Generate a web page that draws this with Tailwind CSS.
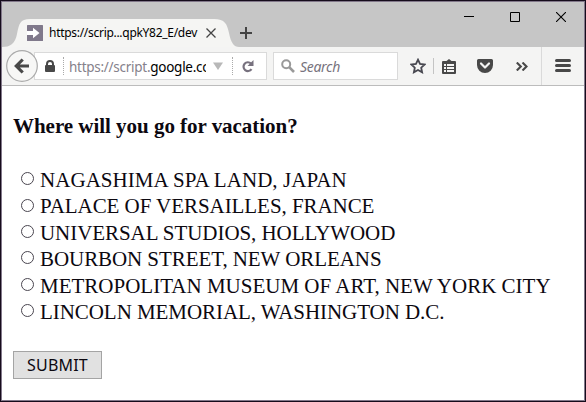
<!DOCTYPE html>
<html lang="en">
<head>
<meta charset="utf-8">
<title>Vacation poll</title>
<script src="https://cdn.jsdelivr.net/npm/@tailwindcss/browser@4"></script>
</head>
<body class="bg-white">
<div class="w-[586px] h-[402px] border border-[#160c1c] overflow-hidden">
<div class="w-[584px] h-[400px] border border-[#82788a] flex flex-col bg-white overflow-hidden">

  <!-- Title bar with the tab strip -->
  <header class="h-[45px] shrink-0 bg-[#c6c6c6] flex items-start">
    <div class="relative w-[237px] h-[28px] mt-[17px]">
      <svg class="absolute inset-0" width="237" height="28" viewBox="0 0 237 28"><path d="M0 28C8 28 13 25 15 15C17 5 18 0 28 0H212C223 0 225 5 227 14C229 24 232 28 237 28Z" fill="#f5f5f3"/></svg>
      <div class="relative flex items-center h-[28px] pl-[25px] font-['Noto_Sans','Open_Sans',sans-serif]">
        <svg class="shrink-0" width="16" height="16" viewBox="0 0 16 16"><rect width="16" height="16" rx="0.5" fill="#80798b"/><path d="M0 6h6V2.8L12.5 8 6 13.2V10H0z" fill="#fff"/></svg>
        <span class="ml-[6px] w-[149px] text-[12px] tracking-[-0.29px] leading-[16px] text-black whitespace-nowrap">https://scrip...qpkY82_E/dev</span>
        <svg class="ml-[8px] shrink-0" width="10" height="10" viewBox="0 0 10 10"><path d="M.5.5l9 9M9.5.5l-9 9" stroke="#444" stroke-width="1.3"/></svg>
      </div>
    </div>
    <svg class="mt-[25px] ml-[1px]" width="12" height="12" viewBox="0 0 12 12"><path d="M6 0v12M0 6h12" stroke="#444" stroke-width="2"/></svg>
    <div class="ml-auto mr-[18px] mt-[10px] flex gap-[36px]">
      <svg width="10" height="10" viewBox="0 0 10 10"><path d="M0 4.500h10" stroke="#000"/></svg>
      <svg width="10" height="10" viewBox="0 0 10 10"><path d="M.5.5h9v9h-9z" fill="none" stroke="#000"/></svg>
      <svg width="10" height="10" viewBox="0 0 10 10"><path d="M0 0l10 10M10 0L0 10" stroke="#000" stroke-width="1.1"/></svg>
    </div>
  </header>

  <!-- Navigation toolbar -->
  <nav class="h-[39px] shrink-0 bg-[#f4f4f3] border-b border-[#bcbcbc] flex items-center font-['Noto_Sans','Open_Sans',sans-serif]">
    <svg class="relative z-10 ml-[4px] shrink-0" width="32" height="32" viewBox="0 0 32 32"><circle cx="16" cy="16" r="15.3" fill="#f7f7f6" stroke="#aaa" stroke-width="1.2"/><path d="M23 16H11M16.7 9.5L10.3 16l6.4 6.5" fill="none" stroke="#484848" stroke-width="3.2"/></svg>
    <div class="-ml-[4px] w-[233px] h-[28px] bg-white border border-[#dadada] flex items-center shrink-0">
      <svg class="ml-[10px] mr-[8px] shrink-0" width="10" height="12" viewBox="0 0 10 12"><path d="M2 6V4a3 3 0 016 0v2" fill="none" stroke="#484848" stroke-width="2"/><rect y="5" width="10" height="7" rx="1" fill="#484848"/></svg>
      <span class="h-[18px] border-l border-dotted border-[#aaa]"></span>
      <span class="ml-[5px] mt-[2px] w-[137px] overflow-hidden whitespace-nowrap text-[13.500px] tracking-[-0.27px] leading-[20px] text-[#85818b]">https://script.<span class="text-black">google.cc</span></span>
      <svg class="ml-[7px] shrink-0" width="10" height="8" viewBox="0 0 10 8"><path d="M0 .5h10L5 8z" fill="#b8b8b8"/></svg>
      <span class="ml-[9px] h-[18px] border-l border-dotted border-[#aaa]"></span>
      <svg class="ml-[9px] shrink-0" width="12" height="13" viewBox="0 0 12 13"><path d="M9.500 9.200A4.400 4.400 0 119 3.500" fill="none" stroke="#77717e" stroke-width="2.2"/><path d="M11.500 0v6h-6z" fill="#77717e"/></svg>
    </div>
    <div class="ml-[6px] w-[125px] h-[28px] bg-white border border-[#dadada] flex items-center shrink-0">
      <svg class="ml-[7px] shrink-0" width="14" height="14" viewBox="0 0 14 14"><circle cx="5.2" cy="5.2" r="4" fill="none" stroke="#999" stroke-width="2"/><path d="M8.200 8.200L13 13" stroke="#999" stroke-width="2.6"/></svg>
      <span class="ml-[5px] mt-[2px] italic text-[14px] tracking-[-0.3px] leading-[20px] text-[#77737d]">Search</span>
    </div>
    <svg class="ml-[12px] shrink-0" width="16" height="16" viewBox="0 0 16 16"><path d="M8 1.700l2 4.200 4.600.6-3.400 3.200.9 4.600L8 12l-4.100 2.300.9-4.600L1.400 6.500 6 5.900z" fill="none" stroke="#484850" stroke-width="1.8"/></svg>
    <span class="ml-[7px] h-[16px] border-l border-[#c4c4c4]"></span>
    <svg class="ml-[8px] shrink-0" width="14" height="15" viewBox="0 0 14 15"><path d="M1 2h3.500L7 0l2.500 2H13a1 1 0 011 1v11a1 1 0 01-1 1H1a1 1 0 01-1-1V3a1 1 0 011-1z" fill="#484848"/><path d="M2 5h2v2H2zM5 5h7v2H5zM2 8h2v2H2zM5 8h7v2H5zM2 11h2v2H2zM5 11h7v2H5z" fill="#f4f4f3"/></svg>
    <svg class="ml-[21px] shrink-0" width="16" height="14" viewBox="0 0 16 14"><path d="M1.500 0h13A1.500 1.500 0 0116 1.500V6A8 8 0 010 6V1.500A1.500 1.500 0 011.500 0z" fill="#484848"/><path d="M4 4.500l4 4 4-4" fill="none" stroke="#f4f4f3" stroke-width="2.200" stroke-linecap="round" stroke-linejoin="round"/></svg>
    <svg class="ml-[23px] shrink-0" width="12" height="9" viewBox="0 0 12 9"><path d="M.8.5l4 4-4 4M6.500.5l4 4-4 4" fill="none" stroke="#484848" stroke-width="2.100"/></svg>
    <span class="ml-[13px] h-[38px] border-l border-[#dadada]"></span>
    <svg class="ml-[13px] shrink-0 mb-px" width="16" height="13" viewBox="0 0 16 13"><path d="M1.500 1.500h13M1.500 6.500h13M1.500 11.500h13" stroke="#484848" stroke-width="3" stroke-linecap="round"/></svg>
  </nav>

  <!-- Poll form -->
  <main class="flex-1 pl-[11px] text-[#0c0810] font-['Liberation_Serif',serif]">
    <h1 class="pt-[27px] text-[21px] tracking-[-0.03px] leading-[26px] font-bold whitespace-nowrap"><span>Where will you go for vacation?</span></h1>
    <form>
      <div class="mt-[28px] pl-[8px] text-[21px] leading-[26.400px] whitespace-nowrap">
        <label class="flex items-center"><input type="radio" name="place" class="appearance-none w-[13px] h-[13px] mb-[3px] mr-[6px] rounded-full border border-[#4a4650] bg-white"><span class="tracking-[0.05px]">NAGASHIMA SPA LAND, JAPAN</span></label>
        <label class="flex items-center"><input type="radio" name="place" class="appearance-none w-[13px] h-[13px] mb-[3px] mr-[6px] rounded-full border border-[#4a4650] bg-white"><span class="tracking-[-0.06px]">PALACE OF VERSAILLES, FRANCE</span></label>
        <label class="flex items-center"><input type="radio" name="place" class="appearance-none w-[13px] h-[13px] mb-[3px] mr-[6px] rounded-full border border-[#4a4650] bg-white"><span class="tracking-[-0.06px]">UNIVERSAL STUDIOS, HOLLYWOOD</span></label>
        <label class="flex items-center"><input type="radio" name="place" class="appearance-none w-[13px] h-[13px] mb-[3px] mr-[6px] rounded-full border border-[#4a4650] bg-white"><span class="tracking-[-0.07px]">BOURBON STREET, NEW ORLEANS</span></label>
        <label class="flex items-center"><input type="radio" name="place" class="appearance-none w-[13px] h-[13px] mb-[3px] mr-[6px] rounded-full border border-[#4a4650] bg-white"><span>METROPOLITAN MUSEUM OF ART, NEW YORK CITY</span></label>
        <label class="flex items-center"><input type="radio" name="place" class="appearance-none w-[13px] h-[13px] mb-[3px] mr-[6px] rounded-full border border-[#4a4650] bg-white"><span class="tracking-[-0.06px]">LINCOLN MEMORIAL, WASHINGTON D.C.</span></label>
      </div>
      <button type="button" class="block mt-[26px] w-[89px] h-[28px] border border-[#a4a4a4] bg-[#e1e1e1] text-[16px] tracking-[0.2px] leading-[26px] font-['Noto_Sans','Open_Sans',sans-serif]">SUBMIT</button>
    </form>
  </main>
</div>
</div>
</body>
</html>
